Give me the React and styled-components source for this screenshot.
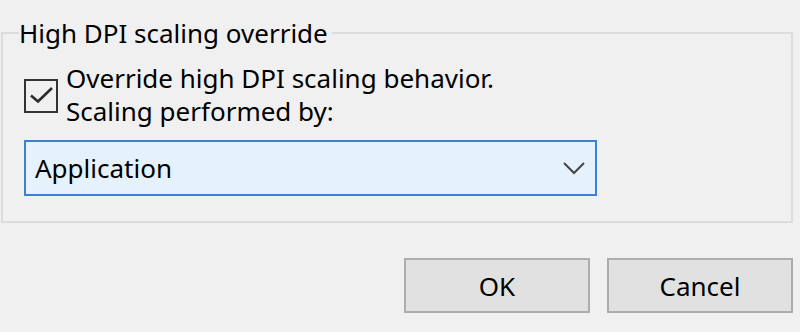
import React from "react";
import styled, { createGlobalStyle } from "styled-components";

const Global = createGlobalStyle`
  html, body { margin: 0; padding: 0; background: #f0f0f0; }
  body { font-family: "Noto Sans", "Open Sans", sans-serif; color: #000; }
`;

const Page = styled.div`
  width: 800px;
  height: 332px;
  box-sizing: border-box;
  padding: 19px 7px 0 1px;
  display: flex;
  flex-direction: column;
  font-size: 26px;
`;

const Group = styled.fieldset`
  margin: 0;
  padding: 0;
  border: 2px solid #dcdcdc;
  min-width: 0;
`;

const Legend = styled.legend`
  margin-left: 16px;
  padding: 0 4px 0 0;
  line-height: 28px;
`;

const Content = styled.div`
  display: flex;
  flex-direction: column;
  gap: 12px;
  padding: 16px 0 25px 21px;
`;

const CheckRow = styled.label`
  display: flex;
  align-items: flex-start;
  gap: 8px;
`;

const Box = styled.span`
  flex: none;
  width: 34px;
  height: 34px;
  box-sizing: border-box;
  border: 2px solid #333;
  margin-top: 16px;
  display: flex;
  align-items: center;
  justify-content: center;
`;

const LabelText = styled.span`
  line-height: 33px;
  margin-top: -1px;
`;

const Combo = styled.div`
  width: 573px;
  height: 56px;
  box-sizing: border-box;
  border: 2px solid #3c7fd6;
  background: #e5f1fb;
  display: flex;
  align-items: center;
  justify-content: space-between;
  padding: 0 10px 0 9px;
`;

const Buttons = styled.div`
  display: flex;
  justify-content: flex-end;
  gap: 17px;
  margin-top: 35px;
`;

const Button = styled.button`
  width: 186px;
  height: 55px;
  box-sizing: border-box;
  border: 2px solid #adadad;
  background: #e1e1e1;
  font: inherit;
  color: #000;
  padding: 0;
`;

export default function App() {
  return (
    <>
      <Global />
      <Page>
        <Group>
          <Legend>High DPI scaling override</Legend>
          <Content>
            <CheckRow>
              <Box>
                <svg width="26" height="20" viewBox="0 0 26 20">
                  <path d="M3 9.5 L10 15.5 L24 2" fill="none" stroke="#2b2b2b" strokeWidth="2.6" />
                </svg>
              </Box>
              <LabelText>
                Override high DPI scaling behavior.
                <br />
                Scaling performed by:
              </LabelText>
            </CheckRow>
            <Combo>
              <span>Application</span>
              <svg width="22" height="13" viewBox="0 0 22 13">
                <path d="M1 1 L11 11 L21 1" fill="none" stroke="#444" strokeWidth="2" />
              </svg>
            </Combo>
          </Content>
        </Group>
        <Buttons>
          <Button>OK</Button>
          <Button>Cancel</Button>
        </Buttons>
      </Page>
    </>
  );
}
